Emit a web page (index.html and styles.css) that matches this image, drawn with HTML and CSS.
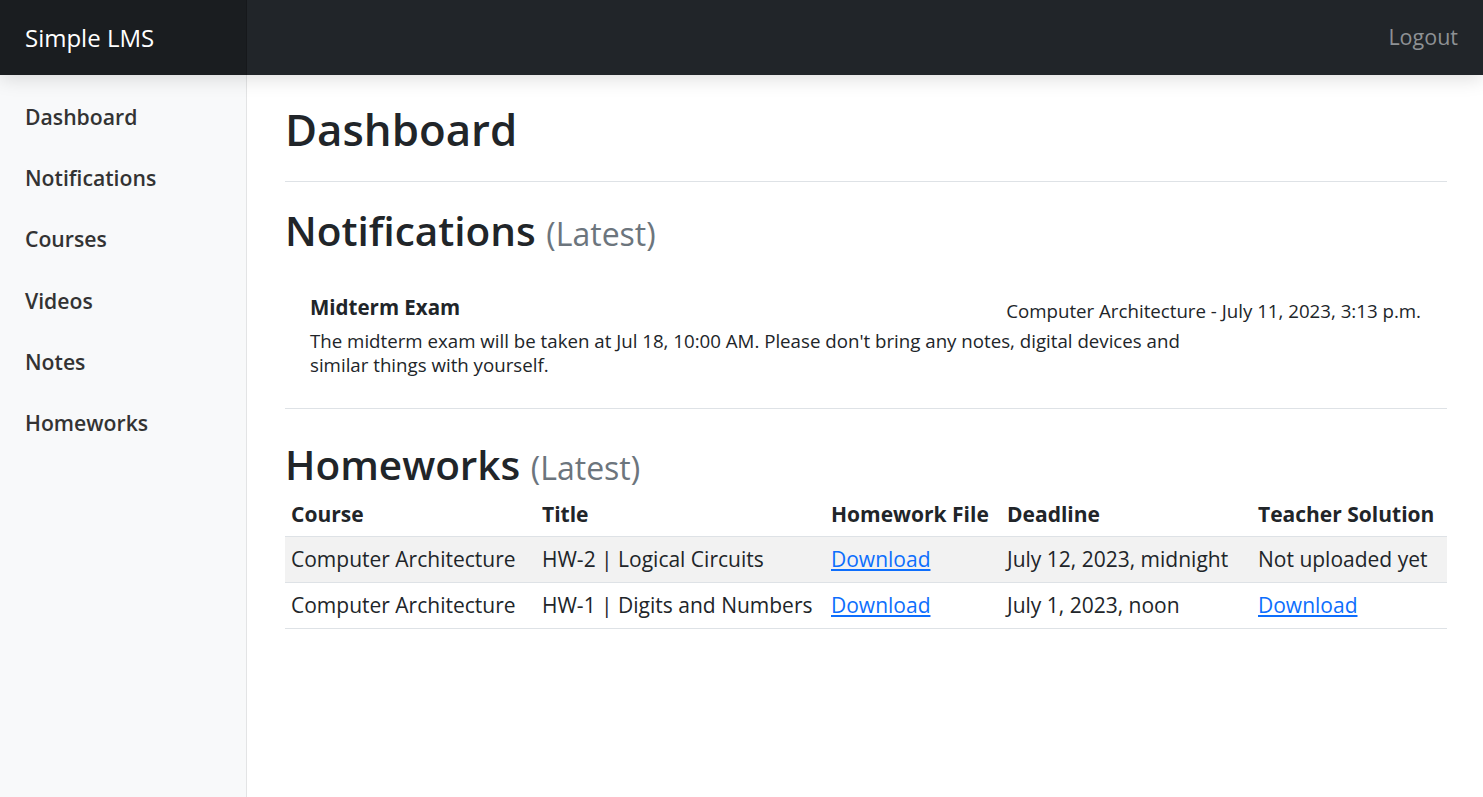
FILE: index.html
```html
<!DOCTYPE html>
<html lang="en">
<head>
<meta charset="utf-8">
<title>Simple LMS - Dashboard</title>
<link rel="stylesheet" href="styles.css">
</head>
<body>
<header class="navbar">
  <a class="brand" href="#">Simple LMS</a>
  <div class="nav-right">
    <a class="logout" href="#">Logout</a>
  </div>
</header>
<div class="layout">
  <nav class="sidebar">
    <ul class="side-nav">
      <li><a href="#">Dashboard</a></li>
      <li><a href="#">Notifications</a></li>
      <li><a href="#">Courses</a></li>
      <li><a href="#">Videos</a></li>
      <li><a href="#">Notes</a></li>
      <li><a href="#">Homeworks</a></li>
    </ul>
  </nav>
  <main class="main">
    <div class="page-head">
      <h1>Dashboard</h1>
    </div>
    <section class="notif-section">
      <h2>Notifications <small>(Latest)</small></h2>
      <div class="notif-list">
        <div class="notif-item">
          <div class="notif-head">
            <div class="notif-title">Midterm Exam</div>
            <div class="notif-meta">Computer Architecture - July 11, 2023, 3:13 p.m.</div>
          </div>
          <p class="notif-text">The midterm exam will be taken at Jul 18, 10:00 AM. Please don't bring any notes, digital devices and similar things with yourself.</p>
        </div>
      </div>
    </section>
    <section class="hw-section">
      <h2>Homeworks <small>(Latest)</small></h2>
      <table class="hw-table">
        <colgroup>
          <col class="c-course"><col class="c-title"><col class="c-file"><col class="c-deadline"><col class="c-solution">
        </colgroup>
        <thead>
          <tr><th>Course</th><th>Title</th><th>Homework File</th><th>Deadline</th><th>Teacher Solution</th></tr>
        </thead>
        <tbody>
          <tr class="striped"><td>Computer Architecture</td><td>HW-2 | Logical Circuits</td><td><a href="#">Download</a></td><td>July 12, 2023, midnight</td><td>Not uploaded yet</td></tr>
          <tr><td>Computer Architecture</td><td>HW-1 | Digits and Numbers</td><td><a href="#">Download</a></td><td>July 1, 2023, noon</td><td><a href="#">Download</a></td></tr>
        </tbody>
      </table>
    </section>
  </main>
</div>
</body>
</html>
```
FILE: styles.css
```css
* { box-sizing: border-box; }
html, body { height: 100%; }
body {
  margin: 0;
  font-family: "Open Sans", "Noto Sans", sans-serif;
  color: #212529;
  background: #fff;
  overflow: hidden;
}
a { color: #0d6efd; }

.navbar {
  display: flex;
  height: 75px;
  background: #212529;
  position: relative;
  z-index: 2;
  box-shadow: 0 4px 18px rgba(0,0,0,0.13);
}
.brand {
  width: 247px;
  flex: none;
  display: flex;
  align-items: center;
  padding-left: 25px;
  background: #1a1d20;
  color: #fff;
  font-size: 24px;
  text-decoration: none;
  border-right: 1px solid #16181b;
}
.nav-right {
  flex: 1;
  display: flex;
  justify-content: flex-end;
  align-items: center;
  padding-right: 25px;
}
.logout {
  color: #8e9194;
  font-size: 21.5px;
  text-decoration: none;
  margin-top: -2px;
}

.layout {
  display: flex;
  height: calc(100% - 75px);
}
.sidebar {
  width: 247px;
  flex: none;
  background: #f8f9fa;
  border-right: 1px solid #e3e4e5;
  padding-top: 11px;
}
.side-nav {
  list-style: none;
  margin: 0;
  padding: 0;
}
.side-nav a {
  display: block;
  padding: 14px 25px;
  font-size: 21.2px;
  line-height: 33.2px;
  font-weight: 600;
  color: #333;
  text-decoration: none;
}

.main {
  flex: 1;
  padding: 0 36px 0 38px;
}
.page-head {
  padding-top: 26px;
  padding-bottom: 24px;
  border-bottom: 1px solid #dee2e6;
}
h1 {
  margin: 0;
  font-size: 43.8px;
  line-height: 56px;
  font-weight: 600;
}
h2 {
  margin: 0;
  font-size: 40.5px;
  line-height: 46px;
  font-weight: 600;
}
h2 small {
  font-size: 32px;
  color: #6c757d;
  font-weight: 400;
}
.notif-section {
  padding-top: 26px;
  border-bottom: 1px solid #dee2e6;
}
.notif-list {
  padding: 37px 26px 31px 25px;
}
.notif-head {
  display: flex;
  justify-content: space-between;
  align-items: flex-start;
}
.notif-title {
  font-size: 20.5px;
  font-weight: 700;
  line-height: 26px;
}
.notif-meta {
  font-size: 18.7px;
  line-height: 24px;
  padding-top: 5px;
  white-space: nowrap;
}
.notif-text {
  margin: 6px 0 0;
  max-width: 890px;
  font-size: 18.7px;
  line-height: 24px;
}
.hw-section {
  padding-top: 33px;
}
.hw-table {
  width: 100%;
  border-collapse: collapse;
  table-layout: fixed;
  font-size: 21px;
}
.c-course { width: 251px; }
.c-title { width: 289px; }
.c-file { width: 176px; }
.c-deadline { width: 251px; }
.hw-table th, .hw-table td {
  text-align: left;
  padding: 0 6px;
  height: 46px;
  white-space: nowrap;
  border-bottom: 1px solid #dee2e6;
  vertical-align: middle;
}
.hw-table th { font-weight: 700; height: 45px; padding-top: 2px; }
.hw-table tr.striped td { background: #f2f2f2; }
.hw-table a { color: #0d6efd; }
```
